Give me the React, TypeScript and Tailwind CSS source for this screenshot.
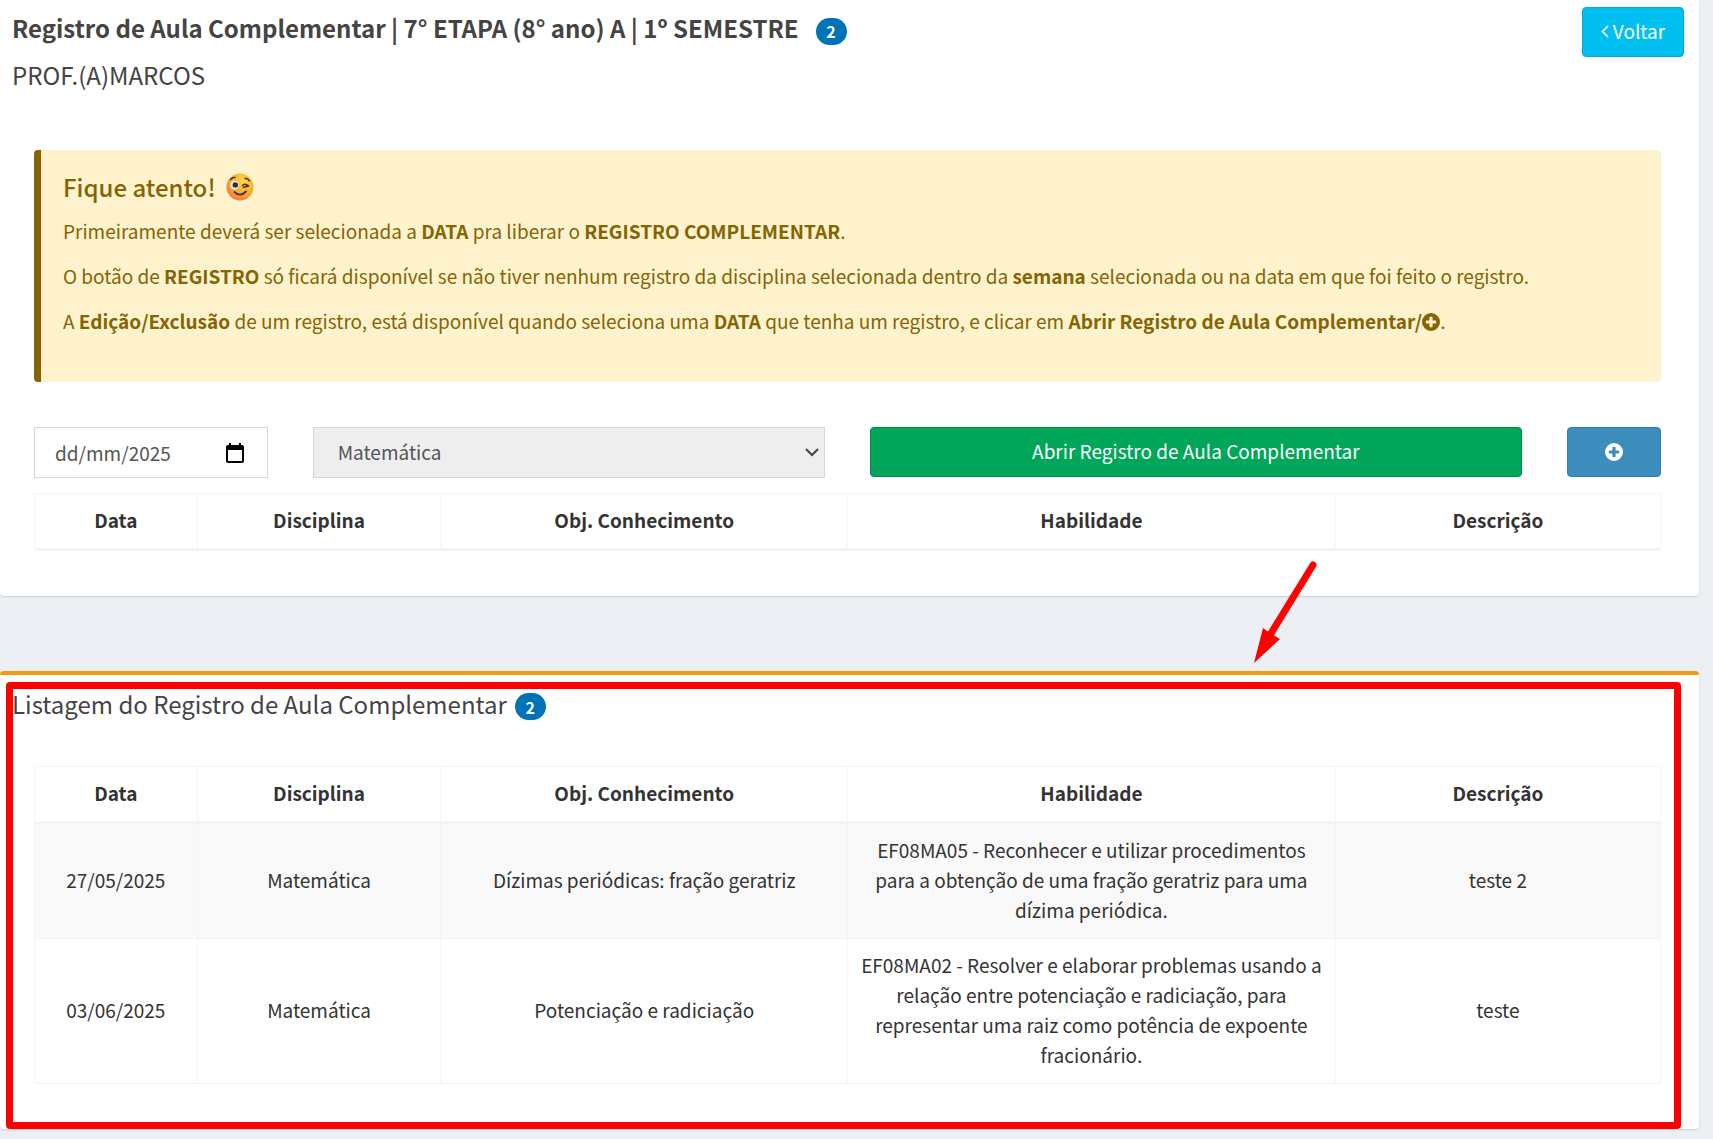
import type { ReactNode } from "react";

const columns = [
  { label: "Data", width: "w-[10%]" },
  { label: "Disciplina", width: "w-[15%]" },
  { label: "Obj. Conhecimento", width: "w-1/4" },
  { label: "Habilidade", width: "w-[30%]" },
  { label: "Descrição", width: "w-1/5" },
];

const registros = [
  [
    "27/05/2025",
    "Matemática",
    "Dízimas periódicas: fração geratriz",
    "EF08MA05 - Reconhecer e utilizar procedimentos para a obtenção de uma fração geratriz para uma dízima periódica.",
    "teste 2",
  ],
  [
    "03/06/2025",
    "Matemática",
    "Potenciação e radiciação",
    "EF08MA02 - Resolver e elaborar problemas usando a relação entre potenciação e radiciação, para representar uma raiz como potência de expoente fracionário.",
    "teste",
  ],
];

function PlusCircle() {
  return (
    <svg viewBox="0 0 18 18" className="inline-block size-[18px] align-[-2px]" aria-hidden="true">
      <path
        fill="currentColor"
        fillRule="evenodd"
        d="M9 0a9 9 0 1 1 0 18A9 9 0 0 1 9 0ZM8.2 3.8q-.8 0-.8.8v2.8H4.6q-.8 0-.8.8v1.6q0 .8.8.8h2.8v2.8q0 .8.8.8h1.6q.8 0 .8-.8v-2.8h2.8q.8 0 .8-.8V8.2q0-.8-.8-.8h-2.8V4.6q0-.8-.8-.8Z"
      />
    </svg>
  );
}

function Wink() {
  return (
    <svg viewBox="0 0 28 28" className="size-7" aria-hidden="true">
      <defs>
        <radialGradient id="face" cx="0.62" cy="0.3" r="0.8">
          <stop offset="0" stopColor="#ffd84a" />
          <stop offset="0.55" stopColor="#fbab34" />
          <stop offset="0.85" stopColor="#f38338" />
          <stop offset="1" stopColor="#e85f8c" />
        </radialGradient>
      </defs>
      <circle cx="14" cy="14" r="13.5" fill="url(#face)" />
      <circle cx="8.5" cy="12" r="4.2" fill="#fff" />
      <circle cx="9.3" cy="12" r="2.8" fill="#40263b" />
      <g fill="none" stroke="#502d35" strokeLinecap="round" strokeWidth="1.5">
        <path d="M4.5 6.5Q6.500 4.200 9 4.500" />
        <path d="M19 5.500Q22 5 23.500 8" />
        <path d="M16.500 12.500Q18 10.500 20 11.500L22.500 13M17.500 14.200L22.500 13" />
        <path d="M8.500 19Q14 24.500 20 18.500" strokeWidth="1.800" />
      </g>
    </svg>
  );
}

function Badge({ children }: { children: ReactNode }) {
  return (
    <span className="mt-1.5 flex h-[27px] w-[31px] items-center justify-center rounded-full bg-[#0073b7] text-base font-bold text-white">
      {children}
    </span>
  );
}

function RegistroTable({ rows }: { rows: string[][] }) {
  return (
    <table className="w-full table-fixed border-collapse border border-[#f4f4f4] text-center leading-[30px]">
      <thead>
        <tr>
          {columns.map((column) => (
            <th
              key={column.label}
              className={`${column.width} border border-b-3 border-[#f4f4f4] px-3 pt-[11px] pb-[13px] font-bold`}
            >
              {column.label}
            </th>
          ))}
        </tr>
      </thead>
      <tbody>
        {rows.map((row) => (
          <tr key={row[0]} className="odd:bg-[#f9f9f9]">
            {row.map((cell, i) => (
              <td key={i} className="border border-[#f4f4f4] px-3 pt-[11px] pb-[13px]">
                {cell}
              </td>
            ))}
          </tr>
        ))}
      </tbody>
    </table>
  );
}

export default function App() {
  return (
    <div className="min-h-screen bg-[#ecf0f5] pr-3.5 font-['Noto_Sans_CJK_SC',sans-serif] text-[19px] text-[#333]">
      <section className="rounded-b bg-white pb-[45px] shadow-[0_1px_2px_rgba(0,0,0,0.15)]">
        <header className="flex items-start justify-between pt-[7px] pr-[15px] pl-3 text-[#444]">
          <div>
            <h1 className="flex items-center gap-[17px] text-2xl leading-[42px] font-bold">
              Registro de Aula Complementar | 7° ETAPA (8° ano) A | 1º SEMESTRE
              <Badge>2</Badge>
            </h1>
            <p className="text-2xl leading-[52px] font-normal">PROF.(A)MARCOS</p>
          </div>
          <a
            href="#voltar"
            className="flex h-[50px] w-[102px] items-center justify-center gap-1 rounded border border-[#00acd6] bg-[#00c0ef] pb-0.5 text-white"
          >
            <svg viewBox="0 0 8 13" className="h-[13px] w-2" aria-hidden="true">
              <path d="M7 1 1.500 6.500 7 12" fill="none" stroke="currentColor" strokeWidth="1.700" />
            </svg>
            Voltar
          </a>
        </header>

        <div className="pt-[49px] pr-[38px] pl-[34px]">
          <div className="rounded border-l-7 border-[#856404] bg-[#fff3cd] px-[22px] pt-[22px] pb-[31px] text-[#856404]">
            <h2 className="mb-3.5 flex items-center gap-2.5 text-2xl leading-[30px] font-medium">
              Fique atento! <Wink />
            </h2>
            <div className="flex flex-col gap-[15px] pb-[15px] leading-[30px]">
              <p>
                Primeiramente deverá ser selecionada a <b>DATA</b> pra liberar o{" "}
                <b>REGISTRO COMPLEMENTAR</b>.
              </p>
              <p>
                O botão de <b>REGISTRO</b> só ficará disponível se não tiver nenhum registro da
                disciplina selecionada dentro da <b>semana</b> selecionada ou na data em que foi
                feito o registro.
              </p>
              <p>
                A <b>Edição/Exclusão</b> de um registro, está disponível quando seleciona uma{" "}
                <b>DATA</b> que tenha um registro, e clicar em{" "}
                <b>
                  Abrir Registro de Aula Complementar/
                  <PlusCircle />
                </b>
                .
              </p>
            </div>
          </div>

          <form className="mt-[45px] mb-[15px] grid grid-cols-12 gap-x-[45px]">
            <div className="col-span-2 flex h-[51px] items-center border border-[#d2d6de] pr-[23px] pl-5 text-[#555]">
              <input
                type="text"
                aria-label="Data"
                defaultValue="dd/mm/2025"
                className="w-full min-w-0 pt-0.5 outline-none"
              />
              <svg viewBox="0 0 18 20" className="h-5 w-[18px] shrink-0 text-black" aria-hidden="true">
                <path
                  fill="currentColor"
                  fillRule="evenodd"
                  d="M3 0h2v2h8V0h2v2h1q2 0 2 2v14q0 2-2 2H2q-2 0-2-2V4q0-2 2-2h1ZM2 7v11h14V7Z"
                />
              </svg>
            </div>
            <div className="relative col-span-4">
              <select
                aria-label="Disciplina"
                className="h-[51px] w-full appearance-none border border-[#d2d6de] bg-[#eee] px-6 text-[#555]"
              >
                <option>Matemática</option>
              </select>
              <svg
                viewBox="0 0 14 9"
                className="pointer-events-none absolute top-[21px] right-1.5 h-[9px] w-3.5 text-[#444]"
                aria-hidden="true"
              >
                <path d="M1 1l6 6 6-6" fill="none" stroke="currentColor" strokeWidth="2" />
              </svg>
            </div>
            <button
              type="button"
              className="col-span-5 h-[50px] rounded border border-[#008d4c] bg-[#00a65a] pb-0.5 text-white"
            >
              Abrir Registro de Aula Complementar
            </button>
            <button
              type="button"
              aria-label="Adicionar"
              className="h-[50px] rounded border border-[#367fa9] bg-[#3c8dbc] pb-0.5 text-white"
            >
              <PlusCircle />
            </button>
          </form>

          <RegistroTable rows={[]} />
        </div>
      </section>

      <div className="relative h-[75px]">
        <svg
          viewBox="0 0 64 106"
          className="absolute right-[382px] bottom-2 h-[106px] w-16"
          aria-hidden="true"
        >
          <path d="M60 8 17 78" stroke="#f00" strokeWidth="7" strokeLinecap="round" />
          <path d="M1 106 10 71 17 76 27 82Z" fill="#f00" />
        </svg>
      </div>

      <section className="relative rounded border-t-4 border-[#f39c12] bg-white pb-[45px] shadow-[0_1px_2px_rgba(0,0,0,0.15)]">
        <h2 className="flex items-center gap-2 pt-3 pl-3 text-2xl leading-[33px] font-normal text-[#444]">
          Listagem do Registro de Aula Complementar
          <Badge>2</Badge>
        </h2>
        <div className="pt-[46px] pr-[38px] pl-[34px]">
          <RegistroTable rows={registros} />
        </div>
        <div className="pointer-events-none absolute top-[7px] right-[18px] bottom-0 left-1.5 rounded border-7 border-[#f00]" />
      </section>
    </div>
  );
}
